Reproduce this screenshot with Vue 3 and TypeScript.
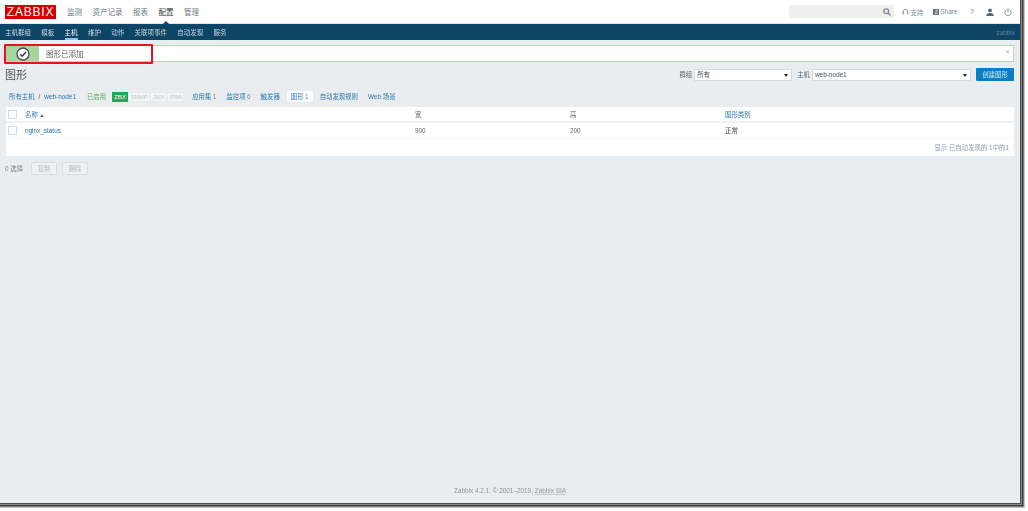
<script setup lang="ts">
const topMenu = ['监测', '资产记录', '报表', '配置', '管理']
const subMenu = ['主机群组', '模板', '主机', '维护', '动作', '关联项事件', '自动发现', '服务']
const badges = [
  { label: 'ZBX', width: 16, on: true },
  { label: 'SNMP', width: 22, on: false },
  { label: 'JMX', width: 17, on: false },
  { label: 'IPMI', width: 17, on: false },
]
const hostTabs = [
  { label: '应用集', count: '1' },
  { label: '监控项', count: '6' },
  { label: '触发器', count: '' },
  { label: '图形', count: '1', active: true },
  { label: '自动发现规则', count: '' },
  { label: 'Web 场景', count: '' },
]
</script>

<template>
  <div class="shot">
    <div class="page">
      <header class="top">
        <div class="logo">ZABBIX</div>
        <nav class="top-menu">
          <a v-for="m in topMenu" :key="m" :class="{ on: m === '配置' }">{{ m }}</a>
        </nav>
        <div class="tools">
          <div class="search">
            <svg width="8" height="8" viewBox="0 0 10 10" fill="none" stroke="#768d99" stroke-width="1.6">
              <circle cx="4" cy="4" r="3" />
              <path d="M6.3 6.3 9.4 9.4" />
            </svg>
          </div>
          <a class="tool">
            <svg width="7" height="8" viewBox="0 0 10 10" fill="none" stroke="#768d99" stroke-width="1.4">
              <path d="M1.5 6V5a3.5 3.5 0 0 1 7 0v1" />
              <rect x="0.8" y="5.5" width="1.6" height="3" fill="#768d99" stroke="none" />
              <rect x="7.6" y="5.5" width="1.6" height="3" fill="#768d99" stroke="none" />
            </svg>
            支持
          </a>
          <a class="tool share"><span class="z">Z</span>Share</a>
          <a class="tool q">?</a>
          <svg class="ico user-ico" width="8" height="8" viewBox="0 0 10 10" fill="#4f6b7c">
            <circle cx="5" cy="3" r="2.4" />
            <path d="M0.5 10V8.6C0.5 7 3 6.4 5 6.4s4.5.6 4.5 2.2V10z" />
          </svg>
          <svg class="ico" width="8" height="8" viewBox="0 0 10 10" fill="none" stroke="#768d99" stroke-width="1.2">
            <path d="M3 2.2a4 4 0 1 0 4 0" />
            <path d="M5 0.5v4.5" />
          </svg>
        </div>
      </header>

      <nav class="sub">
        <div class="sub-items">
          <a v-for="s in subMenu" :key="s" :class="{ on: s === '主机' }">{{ s }}</a>
        </div>
        <span class="user">zabbix</span>
      </nav>

      <main class="content">
        <div class="msg">
          <div class="msg-icon">
            <svg width="14" height="14" viewBox="0 0 14 14">
              <circle cx="7" cy="7" r="6" fill="#fff" stroke="#4a4a4a" stroke-width="1.3" />
              <path d="M4.2 7.2 6.2 9.2 10 5" fill="none" stroke="#333" stroke-width="1.4" />
            </svg>
          </div>
          <span class="msg-text">图形已添加</span>
          <span class="msg-close">×</span>
          <div class="highlight"></div>
        </div>

        <div class="title-row">
          <h1>图形</h1>
          <div class="filters">
            <label>群组</label>
            <div class="select group">所有<i></i></div>
            <label>主机</label>
            <div class="select host">web-node1<i></i></div>
            <button class="create">创建图形</button>
          </div>
        </div>

        <div class="crumbs">
          <a>所有主机</a>
          <span class="slash">/</span>
          <a>web-node1</a>
          <span class="enabled">已启用</span>
          <div class="badges">
            <b
              v-for="b in badges"
              :key="b.label"
              :class="{ zbx: b.on }"
              :style="{ width: b.width + 'px' }"
            >{{ b.label }}</b>
          </div>
          <a
            v-for="t in hostTabs"
            :key="t.label"
            class="tab"
            :class="{ active: t.active }"
          >{{ t.label }}<em v-if="t.count">{{ t.count }}</em></a>
        </div>

        <section class="table">
          <div class="row head">
            <span class="check"></span>
            <a class="c-name">名称 <small>▲</small></a>
            <span class="c-w">宽</span>
            <span class="c-h">高</span>
            <a class="c-t">图形类别</a>
          </div>
          <div class="row body">
            <span class="check"></span>
            <a class="c-name">nginx_status</a>
            <span class="c-w">900</span>
            <span class="c-h">200</span>
            <span class="c-t normal">正常</span>
          </div>
          <div class="paging">显示 已自动发现的 1中的1</div>
        </section>

        <div class="actions">
          <span class="selected">0 选择</span>
          <button disabled>复制</button>
          <button disabled>删除</button>
        </div>
      </main>

      <footer class="foot">Zabbix 4.2.1. © 2001–2019, <u>Zabbix SIA</u></footer>
    </div>
  </div>
</template>

<style scoped>
.shot {
  width: 1028px;
  height: 511px;
  background: #fff;
  font-family: "Liberation Sans", "Noto Sans CJK SC", sans-serif;
  font-size: 6.4px;
  overflow: hidden;
}
/* starts off-canvas so the screenshot's frame runs to the top and left edges */
.page {
  width: 1020px;
  height: 503px;
  margin: -5px 0 0 -5px;
  padding: 5px 0 0 5px;
  display: flex;
  flex-direction: column;
  background: #e9edf0;
  box-shadow: 1px 1px 0 #4c4c4c, 2px 2px 0 #8a8a8a, 3px 3px 0 #3c3c3c, 4px 4px 0 #7a7a7a, 5px 5px 0 #c8c8c8;
  filter: blur(0.45px);
}
a {
  color: #2a78ad;
}
.top {
  height: 23px;
  flex: none;
  box-sizing: border-box;
  background: #fff;
  display: flex;
  align-items: center;
  padding: 0 8px 0 5px;
}
.logo {
  width: 51px;
  height: 14px;
  background: #d40000;
  color: #fff;
  font-size: 12px;
  line-height: 14px;
  letter-spacing: 0.8px;
  text-align: center;
}
.top-menu {
  display: flex;
  gap: 10.5px;
  margin-left: 11px;
  font-size: 7.5px;
}
.top-menu a {
  color: #6b7a82;
}
.top-menu a.on {
  color: #2f3a40;
  position: relative;
}
.top-menu a.on::after {
  content: "";
  position: absolute;
  left: 50%;
  bottom: -8px;
  margin-left: -4px;
  border: 4px solid transparent;
  border-top: 0;
  border-bottom-color: #0c4566;
}
.tools {
  margin-left: auto;
  display: flex;
  align-items: center;
  color: #768d99;
  font-size: 6.5px;
}
.search {
  width: 105px;
  height: 13px;
  background: #efefef;
  display: flex;
  align-items: center;
  justify-content: flex-end;
  padding-right: 3px;
  box-sizing: border-box;
}
.tool {
  display: flex;
  align-items: center;
  gap: 1px;
  color: #768d99;
  margin-left: 8px;
}
.share {
  margin-left: 10px;
}
.z {
  width: 6px;
  height: 6px;
  background: #5b7282;
  color: #fff;
  font-size: 5px;
  line-height: 6px;
  text-align: center;
}
.q {
  margin-left: 12px;
  font-size: 8px;
}
.ico {
  margin-left: 10px;
}
.user-ico {
  margin-left: 12px;
}
.sub {
  height: 17px;
  flex: none;
  background: #0c4566;
  display: flex;
  align-items: center;
  justify-content: space-between;
  padding: 0 5px;
  border-top: 1px solid #dfe4e7;
  box-sizing: border-box;
}
.sub-items {
  display: flex;
  gap: 10.3px;
  font-size: 6.5px;
}
.sub-items a {
  color: #c9d8e2;
}
.sub-items a.on {
  color: #fff;
  position: relative;
}
.sub-items a.on::after {
  content: "";
  position: absolute;
  left: 0;
  right: 0;
  bottom: -3px;
  height: 2px;
  background: #8fc4e4;
}
.user {
  color: #5b8299;
}
.content {
  flex: 1;
  padding: 5px 6px 0 5px;
  min-height: 0;
}
.msg {
  position: relative;
  height: 17px;
  box-sizing: border-box;
  background: #fff;
  border: 1px solid #b4dab0;
  display: flex;
  align-items: center;
}
.msg-icon {
  width: 33px;
  align-self: stretch;
  background: #a5d6a0;
  display: flex;
  align-items: center;
  justify-content: center;
}
.msg-text {
  margin-left: 7px;
  color: #5a5f62;
  font-size: 7.5px;
}
.msg-close {
  margin-left: auto;
  margin-right: 3px;
  margin-top: -5px;
  color: #9aa6ad;
  font-size: 8px;
}
.highlight {
  position: absolute;
  left: -2px;
  top: -2px;
  width: 145px;
  height: 16px;
  border: 2px solid #e8121a;
  border-radius: 1px;
}
.title-row {
  display: flex;
  align-items: center;
  justify-content: space-between;
  margin-top: 4px;
  height: 17px;
}
h1 {
  margin: 0 0 2px;
  font-size: 11px;
  font-weight: 400;
  color: #4a555b;
}
.filters {
  display: flex;
  align-items: center;
  color: #5f696e;
}
.select {
  position: relative;
  height: 12px;
  box-sizing: border-box;
  background: #fff;
  border: 1px solid #d6dce0;
  line-height: 10px;
  padding-left: 2px;
  margin-left: 2px;
  color: #4a555b;
}
.select i {
  position: absolute;
  right: 3px;
  top: 4px;
  border: 2px solid transparent;
  border-top: 3px solid #222;
  border-bottom: 0;
}
.group {
  width: 98px;
  margin-right: 5px;
}
.host {
  width: 159px;
  margin-right: 5px;
}
.create {
  width: 38px;
  height: 13px;
  padding: 0;
  border: 0;
  background: #0a7ec2;
  color: #d5e9f5;
  font: inherit;
  border-radius: 1px;
}
.crumbs {
  display: flex;
  align-items: center;
  margin-top: 8px;
  height: 11px;
  padding-left: 4px;
  white-space: nowrap;
}
.slash {
  margin: 0 4px;
  color: #555;
}
.enabled {
  margin-left: 11px;
  color: #5fae5f;
}
.badges {
  display: flex;
  margin-left: 6px;
  margin-right: 8px;
  font-size: 6px;
}
.badges b {
  font-weight: 400;
  height: 10px;
  line-height: 10px;
  text-align: center;
  color: #c2c9cd;
  background: #f2f4f5;
  box-shadow: inset 0 0 0 0.5px #dfe3e6;
}
.badges b.zbx {
  background: #22a85a;
  box-shadow: none;
  color: #fff;
}
.tab {
  margin-right: 10px;
  padding: 1px 0;
}
.tab em {
  font-style: normal;
  color: #768d99;
  margin-left: 1.5px;
}
.tab.active {
  background: #fff;
  padding: 1px 4px;
  margin: 0 7px 0 -3px;
}
.table {
  margin: 5px 0 0 1px;
  background: #fff;
}
.row {
  display: flex;
  align-items: center;
  height: 14px;
  border-bottom: 2px solid #eef1f3;
}
.row.body {
  height: 15px;
  border-bottom: 1px solid #f3f5f6;
}
.check {
  width: 7px;
  height: 7px;
  margin-left: 2px;
  background: #fff;
  border: 1px solid #d6dce0;
  flex: none;
}
.c-name {
  margin-left: 8px;
  width: 390px;
  flex: none;
}
.c-name small {
  font-size: 5px;
  color: #555;
}
.c-w {
  width: 155px;
  flex: none;
  color: #666;
}
.c-h {
  width: 155px;
  flex: none;
  color: #666;
}
.c-t {
  flex: none;
}
.normal {
  color: #444;
}
.paging {
  height: 17px;
  line-height: 17px;
  text-align: right;
  padding-right: 5px;
  color: #8fa0aa;
}
.actions {
  display: flex;
  align-items: center;
  margin-top: 6px;
  color: #7a858b;
}
.actions button {
  width: 26px;
  height: 13px;
  margin-left: 5px;
  padding: 0;
  background: #eef0f2;
  border: 1px solid #d9dee1;
  color: #b5bdc2;
  font: inherit;
  border-radius: 1px;
}
.actions .selected {
  margin-right: 3px;
}
.foot {
  flex: none;
  height: 24px;
  line-height: 24px;
  text-align: center;
  color: #8b979e;
}
.foot u {
  text-decoration-color: #c4ccd1;
}
</style>
